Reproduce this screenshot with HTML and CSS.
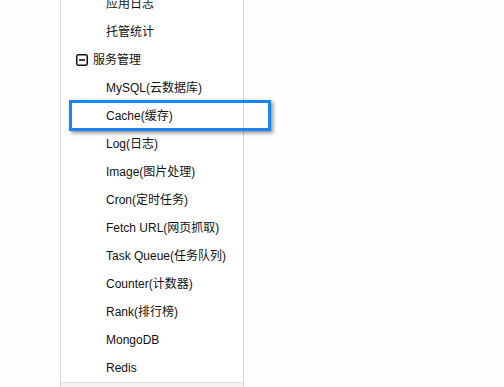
FILE: index.html
```html
<!DOCTYPE html>
<html lang="zh-CN">

<head>
    <meta charset="UTF-8">
    <meta name="viewport" content="width=device-width, initial-scale=1.0">
    <title>服务管理</title>
    <link rel="stylesheet" href="styles.css">
</head>

<body>
    <div class="sidebar">
        <ul class="menu">
            <li class="item">应用日志</li>
            <li class="item">托管统计</li>
            <li class="grupo">
                <svg class="toggle" width="12" height="12" viewBox="0 0 12 12">
                    <rect x="0.75" y="0.75" width="10.5" height="10.5" rx="1.5" fill="none" stroke="#111" stroke-width="1.5"/>
                    <line x1="3" y1="6" x2="9" y2="6" stroke="#111" stroke-width="1.6"/>
                </svg>
                <span>服务管理</span>
            </li>
            <li class="item">MySQL(云数据库)</li>
            <li class="item activo">Cache(缓存)</li>
            <li class="item">Log(日志)</li>
            <li class="item">Image(图片处理)</li>
            <li class="item">Cron(定时任务)</li>
            <li class="item">Fetch URL(网页抓取)</li>
            <li class="item">Task Queue(任务队列)</li>
            <li class="item">Counter(计数器)</li>
            <li class="item">Rank(排行榜)</li>
            <li class="item">MongoDB</li>
            <li class="item">Redis</li>
        </ul>
        <div class="pie"></div>
    </div>
</body>

</html>
```

FILE: styles.css
```css
body {
    font-family: "Liberation Sans", Arial, "Noto Sans CJK SC", sans-serif;
    margin: 0;
    padding: 0;
    background-color: #fefefe;
    overflow: hidden;
}

.sidebar {
    width: 182px;
    height: 387px;
    margin-left: 60px;
    border-left: 1px solid #dcdcdc;
    border-right: 1px solid #d4d4d4;
    background-color: #ffffff;
    display: flex;
    flex-direction: column;
}

.menu {
    list-style: none;
    margin: -10px 0 0 0;
    padding: 0;
    flex: 1;
}

.menu li {
    height: 28px;
    line-height: 28px;
    font-size: 12px;
    color: #111111;
    white-space: nowrap;
}

.item {
    padding-left: 45px;
}

.grupo {
    display: flex;
    align-items: center;
    padding-left: 15px;
}

.toggle {
    display: block;
    margin-right: 5px;
}

.activo {
    position: relative;
}

.activo::before {
    content: "";
    position: absolute;
    left: 8px;
    top: -2px;
    width: 196px;
    height: 25px;
    border: 3px solid #1b84f2;
    box-shadow: 2px 2px 4px rgba(0, 0, 0, 0.45);
}

.pie {
    height: 6px;
    border-top: 1px solid #e2e2e2;
    background-color: #f4f4f4;
}
```
